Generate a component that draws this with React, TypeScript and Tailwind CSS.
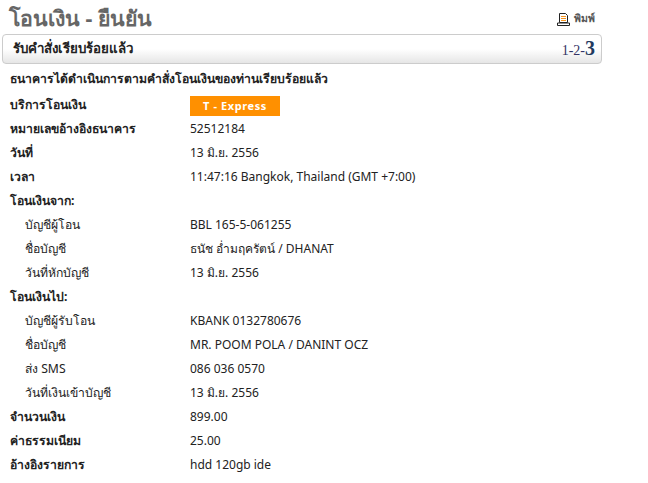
const rows: { l: string; v?: string; b?: boolean; i?: boolean }[] = [
  { l: "หมายเลขอ้างอิงธนาคาร", v: "52512184", b: true },
  { l: "วันที่", v: "13 มิ.ย. 2556", b: true },
  { l: "เวลา", v: "11:47:16 Bangkok, Thailand (GMT +7:00)", b: true },
  { l: "โอนเงินจาก:", b: true },
  { l: "บัญชีผู้โอน", v: "BBL 165-5-061255", i: true },
  { l: "ชื่อบัญชี", v: "ธนัช อ่ำมฤครัตน์ / DHANAT", i: true },
  { l: "วันที่หักบัญชี", v: "13 มิ.ย. 2556", i: true },
  { l: "โอนเงินไป:", b: true },
  { l: "บัญชีผู้รับโอน", v: "KBANK 0132780676", i: true },
  { l: "ชื่อบัญชี", v: "MR. POOM POLA / DANINT OCZ", i: true },
  { l: "ส่ง SMS", v: "086 036 0570", i: true },
  { l: "วันที่เงินเข้าบัญชี", v: "13 มิ.ย. 2556", i: true },
  { l: "จำนวนเงิน", v: "899.00", b: true },
  { l: "ค่าธรรมเนียม", v: "25.00", b: true },
  { l: "อ้างอิงรายการ", v: "hdd 120gb ide", b: true },
];

export default function App() {
  return (
    <div className="w-[648px] h-[483px] overflow-hidden bg-white text-[12px] text-[#222222] font-['Noto_Sans','DejaVu_Sans',sans-serif]">
      <div className="flex w-[602px] items-center justify-between pl-[9px] pt-[2px] h-[34px]">
        <h1 className="text-[21.3px] leading-[26px] font-bold text-[#666666]">โอนเงิน - ยืนยัน</h1>
        <div className="flex items-center gap-[3px] pr-[7px] pt-[2px]">
          <svg width="15" height="15" viewBox="0 0 15 15">
            <path d="M3.5 1.5h6l2 2v7h-8z" fill="#fff" stroke="#222" />
            <path d="M5 4.5h5M5 6.5h5M5 8.5h5" stroke="#f7941d" />
            <path d="M1.5 11h12v2.5h-12z" fill="#fff" stroke="#222" />
          </svg>
          <span className="text-[10.5px] font-bold text-[#555555]">พิมพ์</span>
        </div>
      </div>
      <div className="ml-[2px] flex h-[30px] w-[600px] items-center justify-between rounded-[4px] border border-[#cccccc] bg-gradient-to-b from-white via-white to-[#e6e6e6] pl-[10px] pr-[6px]">
        <span className="text-[13.3px] font-bold text-[#222222]">รับคำสั่งเรียบร้อยแล้ว</span>
        <span className="flex items-baseline font-['Liberation_Serif',serif] text-[14px] text-[#333366]">
          1-2-<span className="text-[20px] leading-none font-bold text-[#1f3a5f]">3</span>
        </span>
      </div>
      <p className="pl-[10px] pt-[6px] h-[29px] text-[12.2px] leading-[18px] font-bold">ธนาคารได้ดำเนินการตามคำสั่งโอนเงินของท่านเรียบร้อยแล้ว</p>
      <div className="flex h-[24px] items-center pl-[10px]">
        <span className="w-[180px] text-[12.2px] font-bold">บริการโอนเงิน</span>
        <span className="mt-[2px] flex h-[20px] w-[90px] items-center justify-center bg-[#ff9000] text-[11px] font-bold tracking-[0.6px] text-white">T - Express</span>
      </div>
      {rows.map((r, n) => (
        <div key={n} className="flex h-[24px] items-center pl-[10px]">
          <span className={`w-[180px] shrink-0 text-[12.2px] ${r.b ? "font-bold" : ""} ${r.i ? "pl-[15px]" : ""}`}>{r.l}</span>
          {r.v && <span>{r.v}</span>}
        </div>
      ))}
    </div>
  );
}
